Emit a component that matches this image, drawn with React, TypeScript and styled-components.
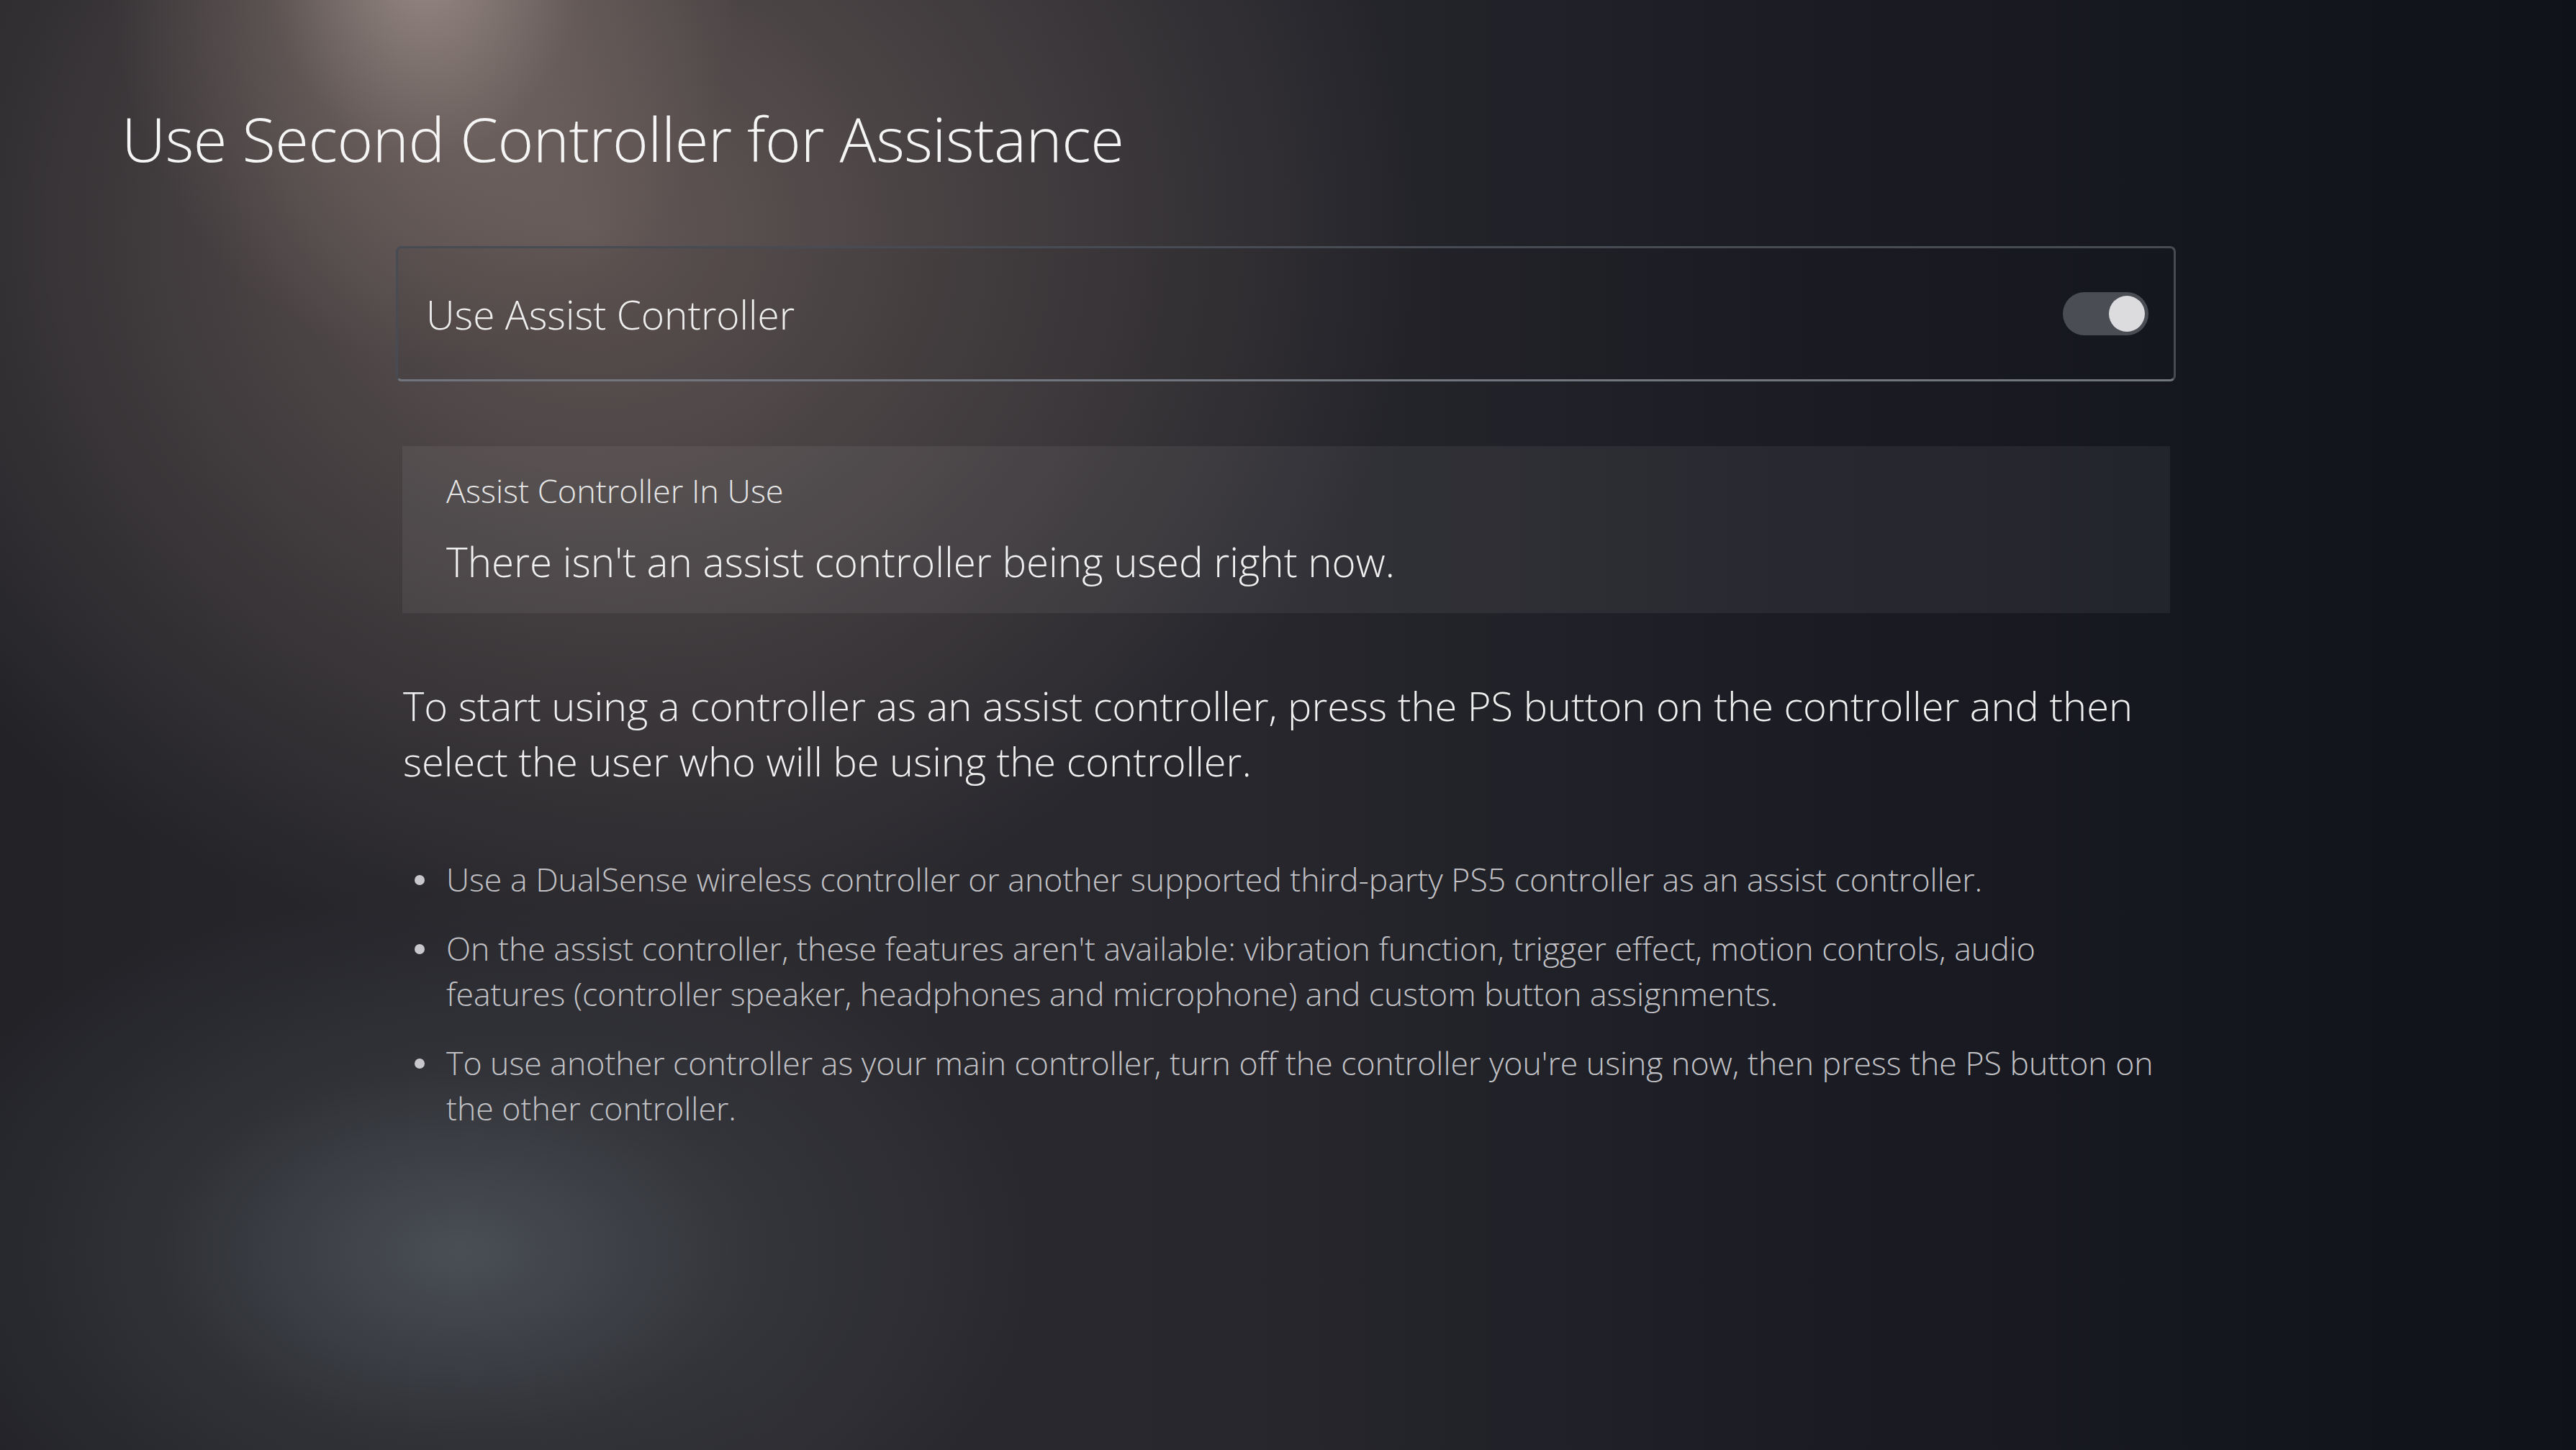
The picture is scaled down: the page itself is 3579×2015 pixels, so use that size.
import styled, {createGlobalStyle} from "styled-components";

const GlobalStyle = createGlobalStyle`
  html, body {
    margin: 0;
    padding: 0;
    background: #14161e;
  }
  * {
    box-sizing: border-box;
  }
`

// dark backdrop with the warm spotlight from the top and a cold glow low on the left
const Screen = styled.div`
  width: 100%;
  min-height: 2015px;
  overflow: hidden;
  font-family: "Open Sans", "Noto Sans", sans-serif;
  font-weight: 300;
  color: #f2f2f2;
  background-color: #14161e;
  background-image:
    radial-gradient(ellipse 440px 560px at 590px -60px, rgba(185, 168, 160, 0.72), rgba(150, 132, 125, 0.3) 50%, rgba(120, 105, 100, 0) 100%),
    radial-gradient(ellipse 1150px 1000px at 820px 320px, rgba(102, 90, 88, 0.95), rgba(82, 74, 74, 0.7) 45%, rgba(50, 48, 52, 0) 100%),
    radial-gradient(ellipse 820px 500px at 640px 1740px, rgba(80, 86, 92, 0.85), rgba(62, 66, 72, 0.45) 50%, rgba(45, 46, 52, 0) 100%),
    linear-gradient(to right, #222227 0%, #2b2a2f 30%, #26262c 50%, #1a1b23 72%, #10121a 100%);
`

const Title = styled.h1`
  margin: 0;
  padding: 141px 0 0 169px;
  font-size: 85px;
  font-weight: 300;
  line-height: 1.2;
  letter-spacing: -0.5px;
  color: #f5f5f5;
`

const Content = styled.div`
  margin: 99px 0 0 550px;
  width: 2473px;
  display: flex;
  flex-direction: column;
`

const SwitchRow = styled.div`
  height: 188px;
  display: flex;
  align-items: center;
  justify-content: space-between;
  padding: 0 35px 0 39px;
  border: 3px solid #474b53;
  border-bottom-color: #71767e;
  border-radius: 8px;
  background: rgba(20, 20, 26, 0.08);
`

const RowLabel = styled.span`
  font-size: 55px;
  color: #eeeeee;
`

const Track = styled.div<{ $on: boolean }>`
  width: 119px;
  height: 60px;
  border-radius: 30px;
  background: #4a4d54;
  display: flex;
  align-items: center;
  justify-content: ${p => (p.$on ? "flex-end" : "flex-start")};
  padding: 0 5px;
`

const Knob = styled.div`
  width: 50px;
  height: 50px;
  border-radius: 50%;
  background: #dcdcdf;
`

const InfoBox = styled.div`
  margin: 90px 8px 0 9px;
  height: 232px;
  padding: 39px 61px 0;
  background: rgba(255, 255, 255, 0.06);
  display: flex;
  flex-direction: column;
  gap: 48px;
`

const InfoLabel = styled.div`
  font-size: 45px;
  line-height: 45px;
  color: #e6e6e6;
`

const InfoText = styled.div`
  font-size: 56.5px;
  line-height: 57px;
  color: #f0f0f0;
`

const Paragraph = styled.p`
  margin: 90px 0 0 10px;
  font-size: 56px;
  line-height: 77px;
  color: #f0f0f0;
`

const Notes = styled.ul`
  margin: 94px 26px 0 70px;
  padding: 0;
  list-style: none;
  display: flex;
  flex-direction: column;
  gap: 32px;
`

const Note = styled.li`
  position: relative;
  font-size: 44.6px;
  line-height: 63.5px;
  color: #c2c2c6;

  &::before {
    content: "";
    position: absolute;
    left: -44px;
    top: 26px;
    width: 14px;
    height: 14px;
    border-radius: 50%;
    background: #c8c8cc;
  }
`

const notes = [
    "Use a DualSense wireless controller or another supported third-party PS5 controller as an assist controller.",
    "On the assist controller, these features aren't available: vibration function, trigger effect, motion controls, audio features (controller speaker, headphones and microphone) and custom button assignments.",
    "To use another controller as your main controller, turn off the controller you're using now, then press the PS button on the other controller.",
]

const App = () => {
    return (
        <>
            <GlobalStyle/>
            <Screen>
                <Title>Use Second Controller for Assistance</Title>
                <Content>
                    <SwitchRow>
                        <RowLabel>Use Assist Controller</RowLabel>
                        <Track $on={true}>
                            <Knob/>
                        </Track>
                    </SwitchRow>
                    <InfoBox>
                        <InfoLabel>Assist Controller In Use</InfoLabel>
                        <InfoText>There isn't an assist controller being used right now.</InfoText>
                    </InfoBox>
                    <Paragraph>
                        To start using a controller as an assist controller, press the PS button on the controller and then
                        select the user who will be using the controller.
                    </Paragraph>
                    <Notes>
                        {notes.map((note, i) => (
                            <Note key={i}>{note}</Note>
                        ))}
                    </Notes>
                </Content>
            </Screen>
        </>
    )
}

export default App;
